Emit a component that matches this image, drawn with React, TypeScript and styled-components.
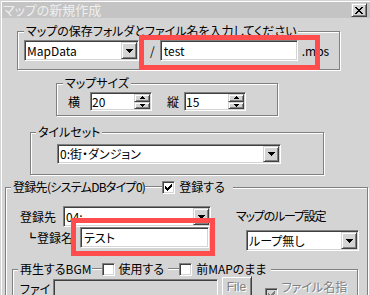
import React from 'react';
import styled, { createGlobalStyle, css } from 'styled-components';

const face = '#d4d4d4';
const shadow = '#808080';
const dark = '#404040';

const GlobalStyle = createGlobalStyle`
  * { box-sizing: border-box; }
  html, body { margin: 0; padding: 0; background: ${face}; overflow: hidden; }
  body {
    font-family: "Noto Sans CJK JP", "Noto Sans", sans-serif;
    font-size: 12px;
    line-height: 14px;
    color: #000;
    font-feature-settings: "palt";
  }
`;

const sunken = css`
  border: 1px solid;
  border-color: ${shadow} #fff #fff ${shadow};
  box-shadow: inset 1px 1px ${dark}, inset -1px -1px ${face};
`;

const raised = css`
  border: 1px solid;
  border-color: ${face} ${dark} ${dark} ${face};
  box-shadow: inset 1px 1px #fff, inset -1px -1px ${shadow};
  background: ${face};
`;

const Window = styled.div`
  position: relative;
  width: 370px;
  height: 295px;
  overflow: hidden;
  background: ${face};
  box-shadow: inset 1px 1px ${face}, inset 2px 2px #fff;
`;

const TitleBar = styled.div`
  display: flex;
  align-items: center;
  justify-content: space-between;
  height: 16px;
  margin: 2px 0 0 2px;
  padding: 0 3px 0 1px;
  background: #c4c4c4;
`;

const Title = styled.span`
  font-size: 13px;
  color: #efefef;
`;

const CloseButton = styled.div`
  ${raised};
  width: 16px;
  height: 14px;
  display: flex;
  align-items: center;
  justify-content: center;
`;

const Body = styled.div`
  display: flex;
  flex-direction: column;
  align-items: flex-start;
  padding-top: 6px;
`;

const GroupBox = styled.fieldset`
  margin: 0;
  min-inline-size: 0;
  border: 1px solid ${shadow};
  box-shadow: inset 1px 1px #fff, 1px 1px #fff;
`;

const Legend = styled.legend`
  display: flex;
  align-items: flex-start;
  padding: 0 2px;
  background: ${face};
  line-height: 14px;
  white-space: nowrap;
`;

const LegendLine = styled.span<{ $w: number }>`
  flex: none;
  width: ${p => p.$w}px;
  height: 2px;
  margin-top: 6px;
  border-top: 1px solid ${shadow};
  border-bottom: 1px solid #fff;
`;

const Text = styled.span<{ $ls?: number }>`
  letter-spacing: ${p => p.$ls ?? 0}px;
`;

const PathGroup = styled(GroupBox)`
  width: 323px;
  margin-left: 17px;
  padding: 2px 0 8px 6px;
`;

const SizeGroup = styled(GroupBox)`
  width: 222px;
  margin: 6px 0 0 56px;
  padding: 2px 0 4px 6px;
`;

const TileGroup = styled(GroupBox)`
  width: 294px;
  margin: 9px 0 0 30px;
  padding: 5px 0 10px 5px;
`;

const RegisterGroup = styled(GroupBox)`
  width: 363px;
  margin: 5px 0 0 5px;
  padding: 12px 0 0 5px;
`;

const BgmGroup = styled(GroupBox)`
  width: 346px;
  margin: 11px 0 0 1px;
  padding: 0 0 10px 5px;
`;

const Row = styled.div`
  display: flex;
  align-items: center;
`;

const TopRow = styled.div`
  display: flex;
  align-items: flex-start;
`;

const ComboBox = styled.div<{ $w: number; $h: number }>`
  ${sunken};
  flex: none;
  width: ${p => p.$w}px;
  height: ${p => p.$h}px;
  padding: 1px;
  display: flex;
  align-items: stretch;
  background: #fff;
`;

const ComboText = styled.span`
  flex: 1;
  display: flex;
  align-items: center;
  padding-left: 1px;
  overflow: hidden;
  white-space: nowrap;
`;

const DropButton = styled.span`
  ${raised};
  flex: none;
  width: 16px;
  display: flex;
  align-items: center;
  justify-content: center;
`;

const TextBox = styled.div<{ $w: number; $h: number; $disabled?: boolean }>`
  ${sunken};
  flex: none;
  width: ${p => p.$w}px;
  height: ${p => p.$h}px;
  padding: 0 3px;
  display: flex;
  align-items: center;
  white-space: nowrap;
  background: ${p => (p.$disabled ? face : '#fff')};
`;

const SpinBox = styled.div`
  ${sunken};
  flex: none;
  width: 62px;
  height: 19px;
  padding: 1px;
  display: flex;
  background: #fff;
`;

const SpinText = styled.span`
  flex: 1;
  display: flex;
  align-items: center;
`;

const SpinButtons = styled.span`
  flex: none;
  width: 16px;
  display: flex;
  flex-direction: column;
`;

const SpinButton = styled.span`
  ${raised};
  flex: 1;
  display: flex;
  align-items: center;
  justify-content: center;
`;

const Slash = styled.span`
  margin: 0 5px 0 11px;
`;

const Suffix = styled.span`
  margin-left: 4px;
`;

const SizeLabel = styled.span<{ $before: number; $after: number }>`
  margin: 0 ${p => p.$after}px 0 ${p => p.$before}px;
`;

const TileCombo = styled.div`
  margin-left: 21px;
`;

const LeftCol = styled.div`
  display: flex;
  flex-direction: column;
  margin-left: 9px;
`;

const RegLabel = styled.span`
  width: 43px;
`;

const SubLabel = styled.span`
  display: flex;
  align-items: center;
  width: 60px;
  padding-left: 6px;
  white-space: nowrap;
`;

const Elbow = styled.span`
  font-weight: 700;
  font-feature-settings: normal;
  font-size: 10px;
  width: 10px;
  margin-right: 1px;
`;

const RightCol = styled.div`
  display: flex;
  flex-direction: column;
  align-items: flex-start;
  margin: 3px 0 0 25px;
`;

const LoopCombo = styled.div`
  margin: 7px 0 0 10px;
`;

const CheckItem = styled.span<{ $disabled?: boolean; $pr?: number }>`
  display: inline-flex;
  align-items: center;
  gap: 4px;
  padding-right: ${p => p.$pr ?? 0}px;
  color: ${p => (p.$disabled ? shadow : '#000')};
  text-shadow: ${p => (p.$disabled ? '1px 1px #fff' : 'none')};
`;

const CheckBox = styled.span<{ $disabled?: boolean }>`
  ${sunken};
  flex: none;
  width: 13px;
  height: 13px;
  display: flex;
  align-items: center;
  justify-content: center;
  background: ${p => (p.$disabled ? face : '#fff')};
`;

const FileLabel = styled.span`
  width: 34px;
  margin: 6px 0 0 2px;
`;

const FileField = styled.div`
  margin-top: 3px;
`;

const FileButton = styled.div`
  ${raised};
  width: 31px;
  height: 22px;
  margin-left: 3px;
  display: flex;
  align-items: center;
  justify-content: center;
  font-family: "Liberation Sans", Arial, sans-serif;
  color: ${shadow};
  text-shadow: 1px 1px #fff;
`;

const FileCheck = styled.div`
  margin: 4px 0 0 13px;
`;

const RedMark = styled.div<{ $x: number; $y: number; $w: number; $h: number }>`
  position: absolute;
  left: ${p => p.$x}px;
  top: ${p => p.$y}px;
  width: ${p => p.$w}px;
  height: ${p => p.$h}px;
  border: 5px solid #ff4d4d;
  pointer-events: none;
`;

const Arrow = () => (
  <svg width="7" height="4" viewBox="0 0 7 4" shapeRendering="crispEdges">
    <path d="M0 0h7v1h-1v1h-1v1h-1v1h-1v-1h-1v-1h-1v-1h-1z" fill="#000" />
  </svg>
);

const SmallArrow = ({ up = false }: { up?: boolean }) => (
  <svg width="5" height="3" viewBox="0 0 5 3" shapeRendering="crispEdges">
    <path d={up ? 'M2 0h1v1h1v1h1v1h-5v-1h1v-1h1z' : 'M0 0h5v1h-1v1h-1v1h-1v-1h-1v-1h-1z'} fill="#000" />
  </svg>
);

const CheckMark = ({ color = '#000' }: { color?: string }) => (
  <svg width="7" height="7" viewBox="0 0 7 7" shapeRendering="crispEdges">
    <path
      d="M0 2h1v3h-1zM1 3h1v3h-1zM2 4h1v3h-1zM3 3h1v3h-1zM4 2h1v3h-1zM5 1h1v3h-1zM6 0h1v3h-1z"
      fill={color}
    />
  </svg>
);

const CloseGlyph = () => (
  <svg width="8" height="7" viewBox="0 0 8 7" shapeRendering="crispEdges">
    <path
      d="M0 0h2v1h-2zM6 0h2v1h-2zM1 1h2v1h-2zM5 1h2v1h-2zM2 2h4v1h-4zM3 3h2v1h-2zM2 4h4v1h-4zM1 5h2v1h-2zM5 5h2v1h-2zM0 6h2v1h-2zM6 6h2v1h-2z"
      fill="#000"
    />
  </svg>
);

const Combo = ({ w, h = 21, text }: { w: number; h?: number; text: string }) => (
  <ComboBox $w={w} $h={h}>
    <ComboText>{text}</ComboText>
    <DropButton>
      <Arrow />
    </DropButton>
  </ComboBox>
);

const Spin = ({ value }: { value: string }) => (
  <SpinBox>
    <SpinText>{value}</SpinText>
    <SpinButtons>
      <SpinButton>
        <SmallArrow up />
      </SpinButton>
      <SpinButton>
        <SmallArrow />
      </SpinButton>
    </SpinButtons>
  </SpinBox>
);

const Check = ({ label, checked = false, disabled = false, pr }: { label: string; checked?: boolean; disabled?: boolean; pr?: number }) => (
  <CheckItem $disabled={disabled} $pr={pr}>
    <CheckBox $disabled={disabled}>{checked && <CheckMark color={disabled ? shadow : '#000'} />}</CheckBox>
    {label}
  </CheckItem>
);

export default function App() {
  return (
    <Window>
      <GlobalStyle />
      <TitleBar>
        <Title>マップの新規作成</Title>
        <CloseButton>
          <CloseGlyph />
        </CloseButton>
      </TitleBar>
      <Body>
        <PathGroup>
          <Legend>マップの保存フォルダとファイル名を入力してください</Legend>
          <Row>
            <Combo w={115} text="MapData" />
            <Slash>/</Slash>
            <TextBox $w={138} $h={21}>test</TextBox>
            <Suffix>.mps</Suffix>
          </Row>
        </PathGroup>

        <SizeGroup>
          <Legend>マップサイズ</Legend>
          <Row>
            <SizeLabel $before={5} $after={10}>横</SizeLabel>
            <Spin value="20" />
            <SizeLabel $before={15} $after={5}>縦</SizeLabel>
            <Spin value="15" />
          </Row>
        </SizeGroup>

        <TileGroup>
          <Legend>タイルセット</Legend>
          <TileCombo>
            <Combo w={224} h={20} text="0:街・ダンジョン" />
          </TileCombo>
        </TileGroup>

        <RegisterGroup>
          <Legend>
            <Text $ls={-0.7}>登録先(システムDBタイプ0)</Text>
            <LegendLine $w={17} />
            <Check label="登録する" checked pr={6} />
          </Legend>
          <TopRow>
            <LeftCol>
              <Row>
                <RegLabel>登録先</RegLabel>
                <Combo w={148} text="04:" />
              </Row>
              <Row>
                <SubLabel>
                  <Elbow>┗</Elbow>
                  登録名
                </SubLabel>
                <TextBox $w={129} $h={21}>テスト</TextBox>
              </Row>
            </LeftCol>
            <RightCol>
              <Text $ls={-1.2}>マップのループ設定</Text>
              <LoopCombo>
                <Combo w={113} text="ループ無し" />
              </LoopCombo>
            </RightCol>
          </TopRow>

          <BgmGroup>
            <Legend>
              <span>再生するBGM</span>
              <LegendLine $w={10} />
              <Check label="使用する" pr={4} />
              <LegendLine $w={11} />
              <Check label="前MAPのまま" pr={3} />
            </Legend>
            <TopRow>
              <FileLabel>ファイル</FileLabel>
              <FileField>
                <TextBox $w={165} $h={20} $disabled />
              </FileField>
              <FileButton>File</FileButton>
              <FileCheck>
                <Check label="ファイル名指定" checked disabled />
              </FileCheck>
            </TopRow>
          </BgmGroup>
        </RegisterGroup>
      </Body>
      <RedMark $x={139} $y={35} $w={181} $h={35} />
      <RedMark $x={71} $y={218} $w={144} $h={38} />
    </Window>
  );
}
